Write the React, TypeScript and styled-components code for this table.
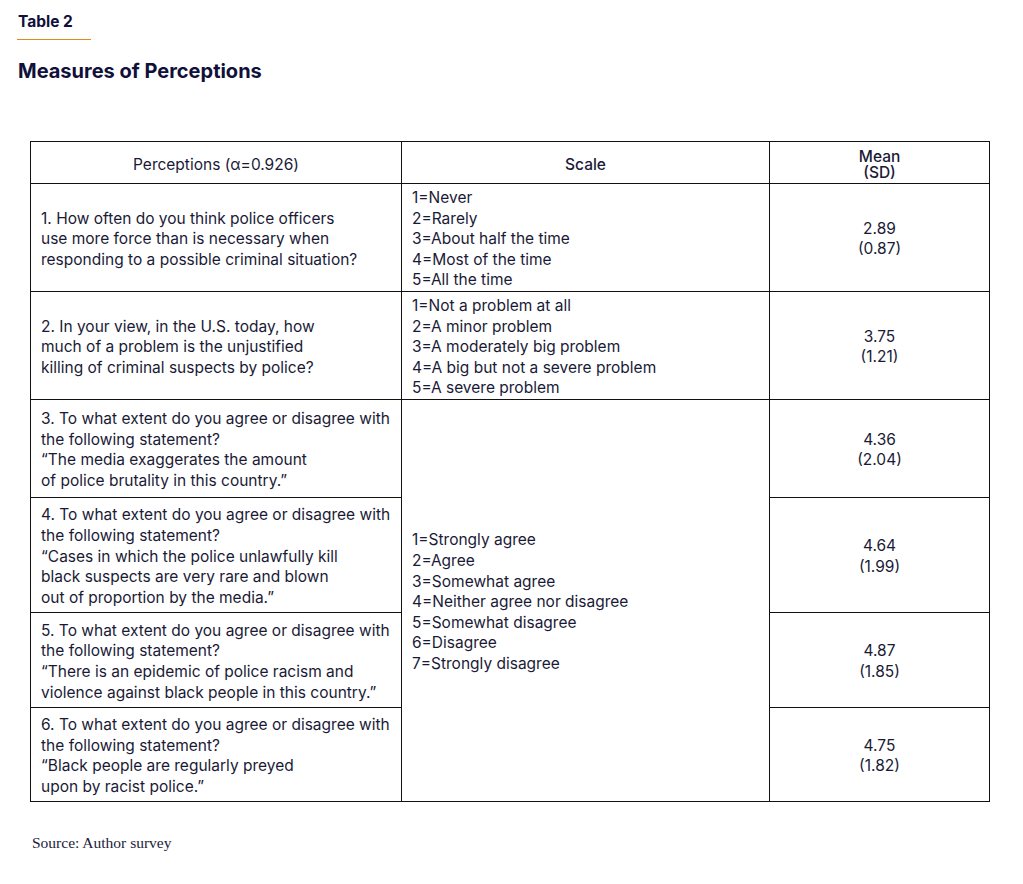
import styled, { createGlobalStyle } from "styled-components";

const GlobalStyle = createGlobalStyle`
  html, body {
    margin: 0;
    padding: 0;
    background: #ffffff;
  }
  body {
    font-family: Inter, "Liberation Sans", sans-serif;
    color: #1c1c3a;
  }
`;

type Row = {
  question: string[];
  mean: string;
  sd: string;
  height: number;
  scale?: string[];
};

const agreeScale = [
  "1=Strongly agree",
  "2=Agree",
  "3=Somewhat agree",
  "4=Neither agree nor disagree",
  "5=Somewhat disagree",
  "6=Disagree",
  "7=Strongly disagree",
];

const rows: Row[] = [
  {
    question: [
      "1. How often do you think police officers",
      "use more force than is necessary when",
      "responding to a possible criminal situation?",
    ],
    scale: [
      "1=Never",
      "2=Rarely",
      "3=About half the time",
      "4=Most of the time",
      "5=All the time",
    ],
    mean: "2.89",
    sd: "(0.87)",
    height: 107,
  },
  {
    question: [
      "2. In your view, in the U.S. today, how",
      "much of a problem is the unjustified",
      "killing of criminal suspects by police?",
    ],
    scale: [
      "1=Not a problem at all",
      "2=A minor problem",
      "3=A moderately big problem",
      "4=A big but not a severe problem",
      "5=A severe problem",
    ],
    mean: "3.75",
    sd: "(1.21)",
    height: 108,
  },
  {
    question: [
      "3. To what extent do you agree or disagree with",
      "the following statement?",
      "\u201CThe media exaggerates the amount",
      "of police brutality in this country.\u201D",
    ],
    mean: "4.36",
    sd: "(2.04)",
    height: 98,
  },
  {
    question: [
      "4. To what extent do you agree or disagree with",
      "the following statement?",
      "\u201CCases in which the police unlawfully kill",
      "black suspects are very rare and blown",
      "out of proportion by the media.\u201D",
    ],
    mean: "4.64",
    sd: "(1.99)",
    height: 115,
  },
  {
    question: [
      "5. To what extent do you agree or disagree with",
      "the following statement?",
      "\u201CThere is an epidemic of police racism and",
      "violence against black people in this country.\u201D",
    ],
    mean: "4.87",
    sd: "(1.85)",
    height: 95,
  },
  {
    question: [
      "6. To what extent do you agree or disagree with",
      "the following statement?",
      "\u201CBlack people are regularly preyed",
      "upon by racist police.\u201D",
    ],
    mean: "4.75",
    sd: "(1.82)",
    height: 94,
  },
];

function App() {
  return (
    <Page>
      <GlobalStyle />
      <Label>Table 2</Label>
      <Rule />
      <Title>Measures of Perceptions</Title>

      <Table>
        <colgroup>
          <col style={{ width: 371 }} />
          <col style={{ width: 368 }} />
          <col />
        </colgroup>
        <thead>
          <HeadRow>
            <HeadCell>Perceptions (α=0.926)</HeadCell>
            <HeadCell $bold>Scale</HeadCell>
            <HeadCell $bold $tight>
              Mean
              <br />
              (SD)
            </HeadCell>
          </HeadRow>
        </thead>
        <tbody>
          {rows.map((row, i) => (
            <BodyRow key={i} $h={row.height}>
              <TextCell>
                {row.question.map((l, j) => (
                  <Line key={j}>{l}</Line>
                ))}
              </TextCell>
              {row.scale && (
                <TextCell>
                  {row.scale.map((l, j) => (
                    <Line key={j}>{l}</Line>
                  ))}
                </TextCell>
              )}
              {i === 2 && (
                <TextCell rowSpan={4}>
                  {agreeScale.map((l, j) => (
                    <Line key={j}>{l}</Line>
                  ))}
                </TextCell>
              )}
              <MeanCell>
                <Line>{row.mean}</Line>
                <Line>{row.sd}</Line>
              </MeanCell>
            </BodyRow>
          ))}
        </tbody>
      </Table>

      <Source>Source: Author survey</Source>
    </Page>
  );
}

const Page = styled.main`
  width: 1023px;
  min-height: 884px;
  padding: 12px 0 0 18px;
  box-sizing: border-box;
`;

const Label = styled.div`
  font-weight: 700;
  font-size: 15.5px;
  line-height: 20px;
  color: #10103a;
`;

const Rule = styled.div`
  width: 74px;
  height: 1px;
  background: #e08a1a;
  margin: 7px 0 0 -1px;
`;

const Title = styled.h1`
  margin: 19px 0 0;
  font-weight: 700;
  font-size: 20px;
  line-height: 24px;
  color: #10103a;
`;

const Table = styled.table`
  margin: 58px 0 0 12px;
  width: 960px;
  border-collapse: collapse;
  table-layout: fixed;
  font-size: 15.5px;
  color: #1a1a36;
`;

const HeadRow = styled.tr`
  height: 42px;
`;

const HeadCell = styled.th<{ $bold?: boolean; $tight?: boolean }>`
  border: 1px solid #111;
  padding: 4px 10px 0;
  text-align: center;
  vertical-align: middle;
  font-weight: ${(p) => (p.$bold ? 500 : 400)};
  line-height: ${(p) => (p.$tight ? "16px" : "20px")};
`;

const BodyRow = styled.tr<{ $h: number }>`
  height: ${(p) => p.$h}px;
`;

const TextCell = styled.td`
  border: 1px solid #111;
  padding: 4px 10px 0;
  vertical-align: middle;
  text-align: left;
`;

const MeanCell = styled(TextCell)`
  text-align: center;
`;

const Line = styled.div`
  line-height: 20.6px;
  white-space: nowrap;
`;

const Source = styled.p`
  margin: 32px 0 0 14px;
  font-family: "Liberation Serif", "Times New Roman", serif;
  font-size: 15.5px;
  color: #1c1c3a;
`;

export default App;
